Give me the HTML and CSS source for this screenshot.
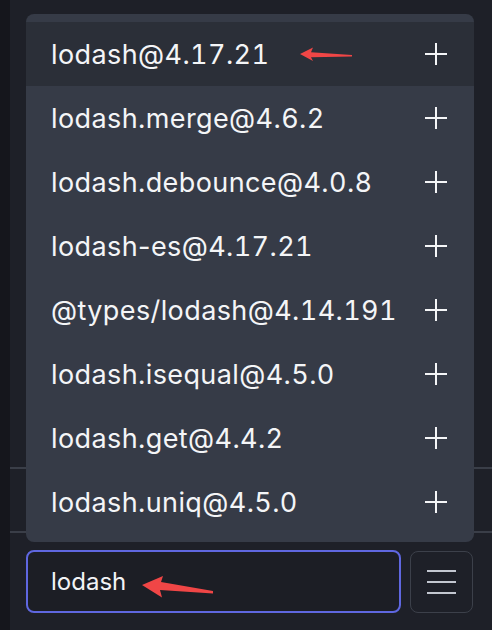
FILE: index.html
```html
<!DOCTYPE html>
<html>
<head>
<meta charset="utf-8">
<link rel="stylesheet" href="styles.css">
</head>
<body>
<div class="app">
  <div class="rail"></div>
  <main class="main">
    <div class="filler"></div>
    <div class="history-row"></div>
    <div class="composer">
      <div class="search">lodash</div>
      <button class="menu-btn" aria-label="menu">
        <span class="bar"></span><span class="bar"></span><span class="bar"></span>
      </button>
    </div>
  </main>

  <ul class="dropdown">
    <li class="item active"><span>lodash@4.17.21</span><svg class="plus" viewBox="0 0 22 22"><path d="M11 0V22M0 11H22"/></svg></li>
    <li class="item"><span>lodash.merge@4.6.2</span><svg class="plus" viewBox="0 0 22 22"><path d="M11 0V22M0 11H22"/></svg></li>
    <li class="item"><span>lodash.debounce@4.0.8</span><svg class="plus" viewBox="0 0 22 22"><path d="M11 0V22M0 11H22"/></svg></li>
    <li class="item"><span>lodash<span class="hy">-</span>es@4.17.21</span><svg class="plus" viewBox="0 0 22 22"><path d="M11 0V22M0 11H22"/></svg></li>
    <li class="item"><span>@types/lodash@4.14.191</span><svg class="plus" viewBox="0 0 22 22"><path d="M11 0V22M0 11H22"/></svg></li>
    <li class="item"><span>lodash.isequal@4.5.0</span><svg class="plus" viewBox="0 0 22 22"><path d="M11 0V22M0 11H22"/></svg></li>
    <li class="item"><span>lodash.get@4.4.2</span><svg class="plus" viewBox="0 0 22 22"><path d="M11 0V22M0 11H22"/></svg></li>
    <li class="item"><span>lodash.uniq@4.5.0</span><svg class="plus" viewBox="0 0 22 22"><path d="M11 0V22M0 11H22"/></svg></li>
  </ul>

  <svg class="annotations" viewBox="0 0 492 630" width="492" height="630">
    <polygon points="300,54 313,47.5 311,52.2 352,55 352,56.6 311,57.2 313,61"/>
    <polygon points="142,585 163,576 161,582 213,591 213,593.5 160,590 162,597.5"/>
  </svg>
</div>
</body>
</html>
```

FILE: styles.css
```css
* { box-sizing: border-box; }
html, body {
  margin: 0;
  padding: 0;
  background: #1e2028;
}
body {
  font-family: Inter, "Noto Sans", "Liberation Sans", sans-serif;
  color: #f2f3f5;
}
.app {
  position: relative;
  display: flex;
  width: 492px;
  height: 630px;
  overflow: hidden;
}
.rail {
  width: 10px;
  flex: none;
  background: #15161c;
}
.main {
  flex: 1;
  display: flex;
  flex-direction: column;
  background: #1e2028;
}
.filler { flex: 1; }
.history-row {
  height: 66px;
  border-top: 2px solid #3a3e48;
  border-bottom: 2px solid #3a3e48;
}
.composer {
  display: flex;
  gap: 9px;
  padding: 17px 19px 17px 16px;
}
.search {
  flex: 1;
  height: 63px;
  border: 2px solid #5f67e0;
  border-radius: 8px;
  background: #1c1e25;
  display: flex;
  align-items: center;
  padding-left: 23px;
  font-size: 24px;
  color: #f2f3f5;
}
.menu-btn {
  width: 63px;
  height: 62px;
  margin-top: 1px;
  border: 1.5px solid #3c404a;
  border-radius: 8px;
  background: #1e2028;
  display: flex;
  flex-direction: column;
  align-items: center;
  justify-content: center;
  gap: 9px;
  padding: 0;
}
.bar {
  display: block;
  width: 29px;
  height: 2px;
  background: #c3c7d0;
}
.dropdown {
  position: absolute;
  left: 26px;
  top: 14px;
  width: 448px;
  margin: 0;
  padding: 8px 0;
  list-style: none;
  background: #363b47;
  border-radius: 8px;
}
.item {
  height: 64px;
  display: flex;
  align-items: center;
  justify-content: space-between;
  padding: 0 27px 0 25px;
  font-size: 27px;
  letter-spacing: 0.4px;
  font-variant-numeric: tabular-nums;
  color: #f4f5f7;
}
.hy { font-variant-numeric: normal; }
.item.active { background: #2b2f38; }
.plus {
  width: 22px;
  height: 22px;
  stroke: #f4f5f7;
  stroke-width: 2;
  fill: none;
}
.annotations {
  position: absolute;
  left: 0;
  top: 0;
  pointer-events: none;
}
.annotations polygon { fill: #f04646; }
```
